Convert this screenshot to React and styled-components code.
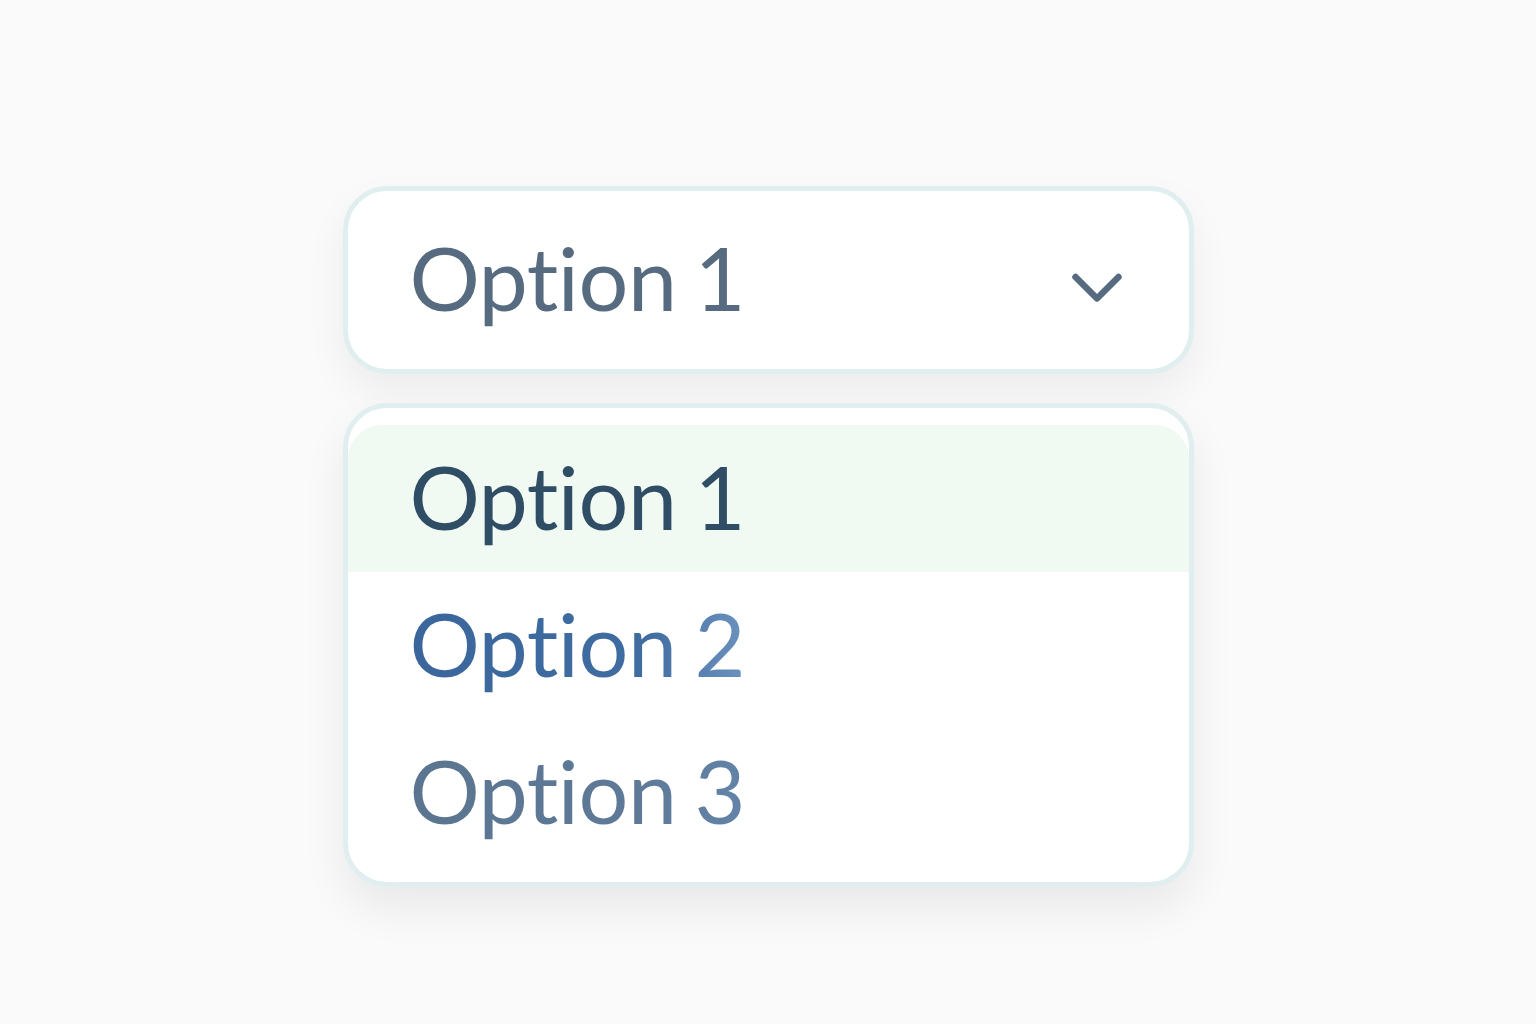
import React from "react";
import styled, { createGlobalStyle } from "styled-components";

const GlobalStyle = createGlobalStyle`
  html, body {
    margin: 0;
    padding: 0;
    background: #fafafa;
    font-family: Lato, "Noto Sans", sans-serif;
  }
`;

const Page = styled.div`
  min-height: 1024px;
  display: flex;
  flex-direction: column;
  align-items: center;
  padding-top: 186px;
  box-sizing: border-box;
`;

const Wrapper = styled.div`
  width: 851px;
  display: flex;
  flex-direction: column;
  gap: 29px;
`;

const Trigger = styled.div`
  height: 188px;
  box-sizing: border-box;
  border: 5px solid #e0eef0;
  border-radius: 44px;
  background: #ffffff;
  box-shadow: 0 18px 40px rgba(0, 0, 0, 0.06);
  display: flex;
  align-items: center;
  justify-content: space-between;
  padding: 0 66px 0 62px;
`;

const Label = styled.span`
  font-size: 88px;
  line-height: 1;
  color: ${(p) => p.color || "#566b80"};
  letter-spacing: -0.5px;
  word-spacing: -4px;
  padding-bottom: 6px;
`;

const ChevronBox = styled.span`
  display: flex;
  margin-top: 18px;
`;

const Menu = styled.div`
  height: 484px;
  box-sizing: border-box;
  border: 5px solid #e0eef0;
  border-radius: 44px;
  background: #ffffff;
  box-shadow: 0 22px 44px rgba(0, 0, 0, 0.07);
  padding-top: 17px;
  display: flex;
  flex-direction: column;
  overflow: hidden;
`;

const Item = styled.div`
  height: 147px;
  flex: none;
  display: flex;
  align-items: center;
  padding-left: 62px;
  background: ${(p) => (p.active ? "#f0f9f2" : "transparent")};
  border-radius: ${(p) => (p.active ? "34px 34px 0 0" : "0")};
`;

const GradientLabel = styled(Label)`
  background: ${(p) => p.gradient};
  -webkit-background-clip: text;
  background-clip: text;
  color: transparent;
`;

function Chevron() {
  return (
    <svg width="52" height="34" viewBox="0 0 52 34" fill="none">
      <path
        d="M4.5 5 L26 26.5 L47.5 5"
        stroke="#566b80"
        strokeWidth="6.5"
        strokeLinecap="round"
        strokeLinejoin="round"
      />
    </svg>
  );
}

export default function App() {
  return (
    <>
      <GlobalStyle />
      <Page>
        <Wrapper>
          <Trigger>
            <Label>Option 1</Label>
            <ChevronBox>
              <Chevron />
            </ChevronBox>
          </Trigger>
          <Menu>
            <Item active>
              <Label color="#2f4d65">Option 1</Label>
            </Item>
            <Item>
              <GradientLabel gradient="linear-gradient(90deg, #3a669c 0%, #3f6ca1 70%, #6c92bd 100%)">
                Option 2
              </GradientLabel>
            </Item>
            <Item>
              <GradientLabel gradient="linear-gradient(90deg, #5b7590 0%, #5e7a98 70%, #6283a8 100%)">
                Option 3
              </GradientLabel>
            </Item>
          </Menu>
        </Wrapper>
      </Page>
    </>
  );
}
